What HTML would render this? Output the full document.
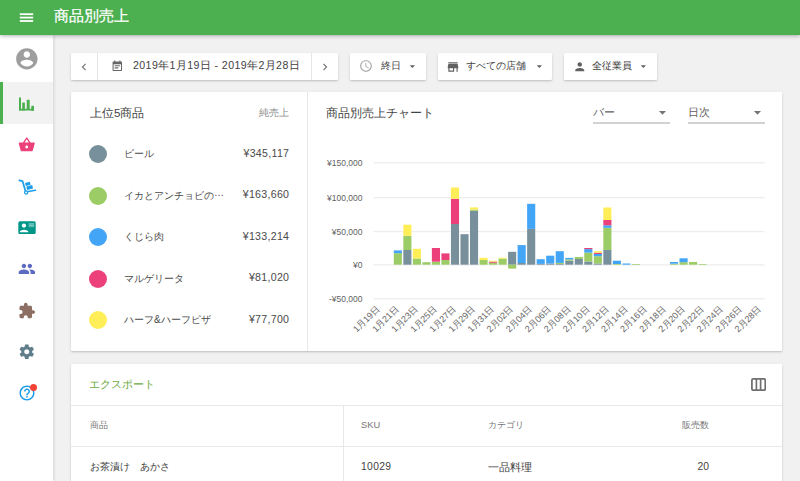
<!DOCTYPE html>
<html><head><meta charset="utf-8">
<style>
*{margin:0;padding:0;box-sizing:border-box}
html,body{width:800px;height:481px;overflow:hidden;background:#f1f1f1;font-family:"Liberation Sans",sans-serif;color:#4a4a4a}
.abs{position:absolute}
.hdr{position:absolute;left:0;top:0;width:800px;height:35.4px;background:#4caf50;box-shadow:0 1px 4px rgba(0,0,0,.3);z-index:5}
.side{position:absolute;left:0;top:35px;width:53px;height:446px;background:#fff;box-shadow:1px 0 3px rgba(0,0,0,.12);z-index:4}
.card{position:absolute;background:#fff;border-radius:1.2px;box-shadow:0 1px 3px rgba(0,0,0,.12),0 1px 1.5px rgba(0,0,0,.1)}
.btn{position:absolute;top:53px;height:27px;background:#fff;border-radius:1.2px;box-shadow:0 1px 3px rgba(0,0,0,.12),0 1px 1.5px rgba(0,0,0,.1)}
.t{position:absolute;white-space:nowrap;line-height:1}
svg{display:block}
.yl{font-family:"Liberation Sans",sans-serif;font-size:8.5px;fill:#5f5f5f}
.xl{font-family:"Liberation Sans",sans-serif;font-size:9px;fill:#666}
</style></head><body>
<div class="hdr">
  <svg class="abs" style="left:0;top:0;width:40px;height:35px" viewBox="0 0 40 35"><rect x="19.8" y="13.3" width="13.4" height="1.8" fill="#fff"/><rect x="19.8" y="16.7" width="13.4" height="1.8" fill="#fff"/><rect x="19.8" y="20.1" width="13.4" height="1.8" fill="#fff"/></svg>
  <div class="t" style="left:53.5px;top:9px;font-size:14.5px;color:#fff;-webkit-text-stroke:0.25px #fff">商品別売上</div>
</div>
<div class="side">
  <svg class="abs" style="left:13.75px;top:11.15px;width:25.7px;height:25.7px" viewBox="0 0 24 24"><path fill="#9e9e9e" d="M12 2C6.48 2 2 6.48 2 12s4.48 10 10 10 10-4.48 10-10S17.52 2 12 2zm0 3c1.66 0 3 1.34 3 3s-1.34 3-3 3-3-1.34-3-3 1.34-3 3-3zm0 14.2c-2.5 0-4.71-1.28-6-3.22.03-1.99 4-3.08 6-3.08 1.99 0 5.970 1.09 6 3.08-1.29 1.94-3.5 3.22-6 3.22z"/></svg>
  <div class="abs" style="left:0;top:47px;width:53px;height:42px;background:#f2f2f2;border-left:3px solid #4caf50"></div>
  <svg class="abs" style="left:18px;top:61px;width:17px;height:15px" viewBox="0 0 17 15">
    <rect x="1" y="1.5" width="2" height="13" fill="#4caf50"/>
    <rect x="4.2" y="6.6" width="2.7" height="8" fill="#4caf50"/>
    <rect x="8.7" y="3.8" width="3" height="10" fill="#4caf50"/>
    <rect x="13.3" y="9.8" width="2.7" height="5" fill="#4caf50"/>
    <rect x="1" y="12.8" width="15" height="1.7" fill="#4caf50"/>
  </svg>
  <svg class="abs" style="left:17.75px;top:100.8px;width:17.5px;height:17.5px" viewBox="0 0 24 24"><path fill="#ec407a" d="M17.21 9l-4.38-6.56c-.19-.28-.51-.42-.83-.42-.32 0-.64.14-.83.43L6.79 9H2c-.55 0-1 .45-1 1 0 .09.01.18.04.27l2.540 9.27c.23.84 1 1.46 1.92 1.46h13c.92 0 1.69-.62 1.93-1.46l2.54-9.27L23 10c0-.55-.45-1-1-1h-4.79zM9 9l3-4.4L15 9H9zm3 8c-1.1 0-2-.9-2-2s.9-2 2-2 2 .9 2 2-.9 2-2 2z"/></svg>
  <svg class="abs" style="left:17.5px;top:143.6px;width:19px;height:17px" viewBox="0 0 19 17">
    <path d="M1.3 1.4 L4.5 2.1 L7.3 11.6" stroke="#1e9de8" stroke-width="1.7" fill="none" stroke-linecap="round" stroke-linejoin="round"/>
    <circle cx="8.1" cy="13.5" r="1.55" stroke="#1e9de8" stroke-width="1.3" fill="none"/>
    <path d="M10.3 12.5 L17.4 11.3" stroke="#1e9de8" stroke-width="1.6" stroke-linecap="round"/>
    <path d="M7.0 3.9 L11.8 2.7 L12.6 5.7 L7.8 6.9 Z" fill="#1e9de8"/>
    <path d="M8.3 7.5 L14.2 6.1 L15.0 9.5 L9.1 10.9 Z" fill="#1e9de8"/>
  </svg>
  <svg class="abs" style="left:17.5px;top:185.5px;width:18px;height:13.5px" viewBox="0 0 18 13.5">
    <rect x="0.3" y="0.3" width="17.4" height="12.9" rx="1.6" fill="#009688"/>
    <circle cx="5.96" cy="4.6" r="2.15" fill="#fff"/>
    <path d="M1.6 11.3 C1.6 7.9 10.5 7.9 10.5 11.3 Z" fill="#fff"/>
    <rect x="10.7" y="2.5" width="5.5" height="0.9" fill="#fff" opacity=".75"/>
    <rect x="10.7" y="3.9" width="5.5" height="0.9" fill="#fff" opacity=".6"/>
    <rect x="10.7" y="5.3" width="5.5" height="0.9" fill="#fff" opacity=".45"/>
  </svg>
  <svg class="abs" style="left:17.6px;top:224.8px;width:17.75px;height:17.75px" viewBox="0 0 24 24"><path fill="#5c6bc0" d="M16 11c1.66 0 2.99-1.34 2.99-3S17.66 5 16 5c-1.66 0-3 1.34-3 3s1.34 3 3 3zm-8 0c1.66 0 2.99-1.34 2.99-3S9.66 5 8 5C6.34 5 5 6.34 5 8s1.34 3 3 3zm0 2c-2.33 0-7 1.17-7 3.5V19h14v-2.5c0-2.33-4.67-3.5-7-3.5zm8 0c-.29 0-.62.02-.97.05 1.16.84 1.97 1.97 1.97 3.45V19h6v-2.5c0-2.33-4.67-3.5-7-3.5z"/></svg>
  <svg class="abs" style="left:17.75px;top:266.5px;width:17.75px;height:17.75px" viewBox="0 0 24 24"><path fill="#8d6e63" d="M20.5 11H19V7c0-1.1-.9-2-2-2h-4V3.5C13 2.12 11.88 1 10.5 1S8 2.12 8 3.5V5H4c-1.1 0-1.99.9-1.99 2v3.8H3.5c1.49 0 2.7 1.21 2.7 2.7s-1.21 2.7-2.7 2.7H2V20c0 1.1.9 2 2 2h3.8v-1.5c0-1.49 1.21-2.7 2.7-2.7 1.49 0 2.7 1.21 2.7 2.7V22H17c1.1 0 2-.9 2-2v-4h1.5c1.38 0 2.5-1.12 2.5-2.5S21.88 11 20.5 11z"/></svg>
  <svg class="abs" style="left:17.75px;top:307.65px;width:17.5px;height:17.5px" viewBox="0 0 24 24"><path fill="#607d8b" d="M19.43 12.98c.04-.32.07-.64.07-.98s-.03-.66-.07-.98l2.11-1.65c.19-.15.24-.42.12-.64l-2-3.46c-.12-.22-.39-.3-.61-.22l-2.49 1c-.52-.4-1.08-.73-1.69-.98l-.38-2.65C14.46 2.18 14.25 2 14 2h-4c-.25 0-.46.18-.49.42l-.38 2.65c-.61.25-1.17.59-1.690.98l-2.49-1c-.23-.09-.49 0-.61.22l-2 3.46c-.13.22-.07.49.12.64l2.11 1.65c-.04.32-.07.65-.07.98s.03.66.07.98l-2.11 1.65c-.19.15-.24.42-.12.64l2 3.46c.12.22.39.3.61.22l2.49-1c.52.4 1.08.73 1.69.98l.38 2.65c.03.24.24.42.49.42h4c.25 0 .46-.18.49-.42l.38-2.65c.61-.25 1.17-.59 1.69-.98l2.49 1c.23.09.49 0 .61-.22l2-3.46c.12-.22.07-.49-.12-.64l-2.11-1.65zM12 15.5c-1.93 0-3.5-1.57-3.5-3.5s1.57-3.5 3.5-3.5 3.5 1.57 3.5 3.5-1.57 3.5-3.5 3.5z"/></svg>
  <svg class="abs" style="left:17.5px;top:349px;width:18px;height:18px" viewBox="0 0 24 24"><path fill="#1e9de8" d="M11 18h2v-2h-2v2zm1-16C6.48 2 2 6.48 2 12s4.48 10 10 10 10-4.48 10-10S17.52 2 12 2zm0 18c-4.41 0-8-3.59-8-8s3.59-8 8-8 8 3.590 8 8-3.59 8-8 8zm0-14c-2.21 0-4 1.79-4 4h2c0-1.1.9-2 2-2s2 .9 2 2c0 2-3 1.75-3 5h2c0-2.25 3-2.5 3-5 0-2.21-1.79-4-4-4z"/></svg>
  <div class="abs" style="left:29.7px;top:348.8px;width:7.6px;height:7.6px;border-radius:50%;background:#f44336"></div>
</div>

<!-- toolbar -->
<div class="btn" style="left:71px;width:267px">
  <svg class="abs" style="left:6px;top:6.5px;width:14px;height:14px" viewBox="0 0 24 24"><path fill="#757575" d="M15.41 7.41L14 6l-6 6 6 6 1.41-1.41L10.83 12z"/></svg>
  <div class="abs" style="left:26px;top:0;width:1px;height:27px;background:#e6e6e6"></div>
  <svg class="abs" style="left:39.6px;top:7px;width:12.6px;height:12.6px" viewBox="0 0 24 24"><path fill="#666" d="M17 10H7v2h10v-2zm2-7h-1V1h-2v2H8V1H6v2H5c-1.11 0-1.99.9-1.99 2L3 19c0 1.1.89 2 2 2h14c1.1 0 2-.9 2-2V5c0-1.1-.9-2-2-2zm0 16H5V8h14v11zm-5-5H7v2h7v-2z"/></svg>
  <div class="t" style="left:62px;top:7.4px;font-size:10.6px;letter-spacing:0.4px;color:#424242">2019年1月19日 - 2019年2月28日</div>
  <div class="abs" style="left:240px;top:0;width:1px;height:27px;background:#e6e6e6"></div>
  <svg class="abs" style="left:247px;top:6.5px;width:14px;height:14px" viewBox="0 0 24 24"><path fill="#757575" d="M10 6L8.59 7.41 13.17 12l-4.58 4.59L10 18l6-6z"/></svg>
</div>
<div class="btn" style="left:350px;width:75.5px">
  <svg class="abs" style="left:8.5px;top:6px;width:14px;height:14px" viewBox="0 0 24 24"><path fill="#a6a6a6" d="M11.99 2C6.47 2 2 6.48 2 12s4.47 10 9.99 10C17.52 22 22 17.52 22 12S17.52 2 11.99 2zM12 20c-4.42 0-8-3.58-8-8s3.58-8 8-8 8 3.58 8 8-3.58 8-8 8zm.5-13H11v6l5.25 3.15.75-1.23-4.5-2.67z"/></svg>
  <div class="t" style="left:31px;top:8px;font-size:10px;color:#424242">終日</div>
  <svg class="abs" style="left:55.8px;top:7.2px;width:12.7px;height:12.7px" viewBox="0 0 24 24"><path fill="#616161" d="M7 10l5 5 5-5z"/></svg>
</div>
<div class="btn" style="left:437.5px;width:114.5px">
  <svg class="abs" style="left:8px;top:6.5px;width:14px;height:14px" viewBox="0 0 24 24"><path fill="#616161" d="M20 4H4v2h16V4zm1 10v-2l-1-5H4l-1 5v2h1v6h10v-6h4v6h2v-6h1zm-9 4H6v-4h6v4z"/></svg>
  <div class="t" style="left:28.5px;top:8px;font-size:10px;color:#424242">すべての店舗</div>
  <svg class="abs" style="left:95px;top:7.2px;width:12.7px;height:12.7px" viewBox="0 0 24 24"><path fill="#616161" d="M7 10l5 5 5-5z"/></svg>
</div>
<div class="btn" style="left:564px;width:93px">
  <svg class="abs" style="left:9px;top:6.5px;width:13.5px;height:13.5px" viewBox="0 0 24 24"><path fill="#616161" d="M12 12c2.21 0 4-1.79 4-4s-1.79-4-4-4-4 1.79-4 4 1.79 4 4 4zm0 2c-2.67 0-8 1.34-8 4v2h16v-2c0-2.66-5.33-4-8-4z"/></svg>
  <div class="t" style="left:27.5px;top:8px;font-size:10px;color:#424242">全従業員</div>
  <svg class="abs" style="left:73px;top:7.2px;width:12.7px;height:12.7px" viewBox="0 0 24 24"><path fill="#616161" d="M7 10l5 5 5-5z"/></svg>
</div>

<!-- card 1 -->
<div class="card" style="left:71px;top:92px;width:711px;height:259px">
  <div class="abs" style="left:236px;top:0;width:1px;height:259px;background:#e8e8e8"></div>
  <div class="t" style="left:19px;top:15px;font-size:11.6px;color:#424242">上位5商品</div>
  <div class="t" style="left:150px;width:68px;text-align:right;top:16px;font-size:9.5px;color:#8c8c8c">純売上</div>

  <div class="abs" style="left:18px;top:53px;width:18px;height:18px;border-radius:50%;background:#78909c"></div>
  <div class="t" style="left:53px;top:57px;font-size:10px">ビール</div>
  <div class="t" style="left:118px;width:100.3px;text-align:right;top:55.7px;font-size:10.6px;letter-spacing:0.3px">¥345,117</div>

  <div class="abs" style="left:18px;top:94.5px;width:18px;height:18px;border-radius:50%;background:#9ccc65"></div>
  <div class="t" style="left:53px;top:98.5px;font-size:10px">イカとアンチョビの<span style="position:relative;top:-2.5px;letter-spacing:-0.5px">…</span></div>
  <div class="t" style="left:118px;width:100.3px;text-align:right;top:97.2px;font-size:10.6px;letter-spacing:0.3px">¥163,660</div>

  <div class="abs" style="left:18px;top:136px;width:18px;height:18px;border-radius:50%;background:#42a5f5"></div>
  <div class="t" style="left:53px;top:140px;font-size:10px">くじら肉</div>
  <div class="t" style="left:118px;width:100.3px;text-align:right;top:138.7px;font-size:10.6px;letter-spacing:0.3px">¥133,214</div>

  <div class="abs" style="left:18px;top:177.5px;width:18px;height:18px;border-radius:50%;background:#ec407a"></div>
  <div class="t" style="left:53px;top:181.5px;font-size:10px">マルゲリータ</div>
  <div class="t" style="left:118px;width:100.3px;text-align:right;top:180.2px;font-size:10.6px;letter-spacing:0.3px">¥81,020</div>

  <div class="abs" style="left:18px;top:219px;width:18px;height:18px;border-radius:50%;background:#ffee58"></div>
  <div class="t" style="left:53px;top:223px;font-size:10px">ハーフ&amp;ハーフピザ</div>
  <div class="t" style="left:118px;width:100.3px;text-align:right;top:221.7px;font-size:10.6px;letter-spacing:0.3px">¥77,700</div>

  <div class="t" style="left:254.5px;top:15px;font-size:11.6px;color:#424242">商品別売上チャート</div>

  <div class="t" style="left:522px;top:15px;font-size:10.6px;color:#616161">バー</div>
  <svg class="abs" style="left:583.35px;top:11.65px;width:17px;height:17px" viewBox="0 0 24 24"><path fill="#757575" d="M7 10l5 5 5-5z"/></svg>
  <div class="abs" style="left:522px;top:30px;width:77px;height:1.6px;background:#d2d2d2"></div>
  <div class="t" style="left:616.5px;top:15px;font-size:10.6px;color:#616161">日次</div>
  <svg class="abs" style="left:678px;top:11.65px;width:17px;height:17px" viewBox="0 0 24 24"><path fill="#757575" d="M7 10l5 5 5-5z"/></svg>
  <div class="abs" style="left:616.5px;top:30px;width:77px;height:1.6px;background:#d2d2d2"></div>
</div>

<svg class="abs" style="left:0;top:0;width:800px;height:481px;z-index:2" viewBox="0 0 800 481">
<rect x="373.5" y="162.15" width="391" height="1.3" fill="#ededed"/>
<text x="362.5" y="165.80" text-anchor="end" class="yl">¥150,000</text>
<rect x="373.5" y="197.05" width="391" height="1.3" fill="#ededed"/>
<text x="362.5" y="200.70" text-anchor="end" class="yl">¥100,000</text>
<rect x="373.5" y="230.95" width="391" height="1.3" fill="#ededed"/>
<text x="362.5" y="234.60" text-anchor="end" class="yl">¥50,000</text>
<rect x="373.5" y="264.25" width="391" height="1.3" fill="#ededed"/>
<text x="362.5" y="267.90" text-anchor="end" class="yl">¥0</text>
<rect x="373.5" y="298.15" width="391" height="1.3" fill="#ededed"/>
<text x="362.5" y="301.80" text-anchor="end" class="yl">-¥50,000</text>
<rect x="393.80" y="253.20" width="8.1" height="11.50" fill="#9ccc65"/>
<rect x="393.80" y="250.40" width="8.1" height="2.80" fill="#42a5f5"/>
<rect x="403.32" y="250.00" width="8.1" height="14.70" fill="#78909c"/>
<rect x="403.32" y="235.80" width="8.1" height="14.20" fill="#9ccc65"/>
<rect x="403.32" y="224.70" width="8.1" height="11.10" fill="#ffee58"/>
<rect x="412.85" y="258.50" width="8.1" height="6.20" fill="#9ccc65"/>
<rect x="412.85" y="248.80" width="8.1" height="9.70" fill="#ffee58"/>
<rect x="422.37" y="262.20" width="8.1" height="2.50" fill="#9ccc65"/>
<rect x="431.89" y="261.70" width="8.1" height="3.00" fill="#9ccc65"/>
<rect x="431.89" y="248.00" width="8.1" height="13.70" fill="#ec407a"/>
<rect x="441.42" y="260.00" width="8.1" height="4.70" fill="#9ccc65"/>
<rect x="441.42" y="253.40" width="8.1" height="6.60" fill="#ec407a"/>
<rect x="450.94" y="224.00" width="8.1" height="40.70" fill="#78909c"/>
<rect x="450.94" y="198.80" width="8.1" height="25.20" fill="#ec407a"/>
<rect x="450.94" y="187.50" width="8.1" height="11.30" fill="#ffee58"/>
<rect x="460.47" y="234.20" width="8.1" height="30.50" fill="#78909c"/>
<rect x="469.99" y="210.80" width="8.1" height="53.90" fill="#78909c"/>
<rect x="469.99" y="209.50" width="8.1" height="1.30" fill="#9ccc65"/>
<rect x="469.99" y="207.40" width="8.1" height="2.10" fill="#ffee58"/>
<rect x="479.51" y="260.00" width="8.1" height="4.70" fill="#9ccc65"/>
<rect x="479.51" y="257.80" width="8.1" height="2.20" fill="#ffee58"/>
<rect x="489.04" y="262.80" width="8.1" height="1.90" fill="#9ccc65"/>
<rect x="489.04" y="261.60" width="8.1" height="1.20" fill="#ec407a"/>
<rect x="489.04" y="260.70" width="8.1" height="0.90" fill="#ffee58"/>
<rect x="498.56" y="258.60" width="8.1" height="6.10" fill="#9ccc65"/>
<rect x="498.56" y="257.70" width="8.1" height="0.90" fill="#ffee58"/>
<rect x="508.09" y="251.80" width="8.1" height="12.90" fill="#78909c"/>
<rect x="517.61" y="263.00" width="8.1" height="1.70" fill="#78909c"/>
<rect x="517.61" y="245.10" width="8.1" height="17.90" fill="#42a5f5"/>
<rect x="527.13" y="228.90" width="8.1" height="35.80" fill="#78909c"/>
<rect x="527.13" y="203.80" width="8.1" height="25.10" fill="#42a5f5"/>
<rect x="536.66" y="263.90" width="8.1" height="0.80" fill="#78909c"/>
<rect x="536.66" y="259.20" width="8.1" height="4.70" fill="#42a5f5"/>
<rect x="546.18" y="263.50" width="8.1" height="1.20" fill="#78909c"/>
<rect x="546.18" y="255.70" width="8.1" height="7.80" fill="#42a5f5"/>
<rect x="555.71" y="264.00" width="8.1" height="0.70" fill="#78909c"/>
<rect x="555.71" y="262.90" width="8.1" height="1.10" fill="#9ccc65"/>
<rect x="555.71" y="251.20" width="8.1" height="11.70" fill="#42a5f5"/>
<rect x="565.23" y="260.70" width="8.1" height="4.00" fill="#78909c"/>
<rect x="565.23" y="259.40" width="8.1" height="1.30" fill="#9ccc65"/>
<rect x="565.23" y="257.90" width="8.1" height="1.50" fill="#42a5f5"/>
<rect x="574.75" y="259.00" width="8.1" height="5.70" fill="#78909c"/>
<rect x="574.75" y="257.00" width="8.1" height="2.00" fill="#9ccc65"/>
<rect x="584.28" y="261.50" width="8.1" height="3.20" fill="#78909c"/>
<rect x="584.28" y="252.60" width="8.1" height="8.90" fill="#9ccc65"/>
<rect x="584.28" y="249.10" width="8.1" height="3.50" fill="#42a5f5"/>
<rect x="584.28" y="248.00" width="8.1" height="1.10" fill="#ec407a"/>
<rect x="593.80" y="263.50" width="8.1" height="1.20" fill="#78909c"/>
<rect x="593.80" y="256.20" width="8.1" height="7.30" fill="#9ccc65"/>
<rect x="593.80" y="254.00" width="8.1" height="2.20" fill="#42a5f5"/>
<rect x="593.80" y="252.70" width="8.1" height="1.30" fill="#ec407a"/>
<rect x="593.80" y="251.20" width="8.1" height="1.50" fill="#ffee58"/>
<rect x="603.33" y="250.00" width="8.1" height="14.70" fill="#78909c"/>
<rect x="603.33" y="227.80" width="8.1" height="22.20" fill="#9ccc65"/>
<rect x="603.33" y="225.30" width="8.1" height="2.50" fill="#42a5f5"/>
<rect x="603.33" y="220.00" width="8.1" height="5.30" fill="#ec407a"/>
<rect x="603.33" y="207.50" width="8.1" height="12.50" fill="#ffee58"/>
<rect x="612.85" y="264.00" width="8.1" height="0.70" fill="#9ccc65"/>
<rect x="612.85" y="260.70" width="8.1" height="3.30" fill="#42a5f5"/>
<rect x="622.37" y="263.50" width="8.1" height="1.20" fill="#42a5f5"/>
<rect x="631.90" y="264.00" width="8.1" height="0.70" fill="#9ccc65"/>
<rect x="669.99" y="263.70" width="8.1" height="1.00" fill="#9ccc65"/>
<rect x="669.99" y="262.00" width="8.1" height="1.70" fill="#42a5f5"/>
<rect x="679.52" y="262.20" width="8.1" height="2.50" fill="#9ccc65"/>
<rect x="679.52" y="258.30" width="8.1" height="3.90" fill="#42a5f5"/>
<rect x="689.04" y="262.00" width="8.1" height="2.70" fill="#9ccc65"/>
<rect x="698.57" y="264.00" width="8.1" height="0.70" fill="#9ccc65"/>
<rect x="508.09" y="264.70" width="8.1" height="3.90" fill="#9ccc65"/>
<text transform="translate(380.17,309.5) rotate(-45)" text-anchor="end" class="xl">1月19日</text>
<text transform="translate(399.24,309.5) rotate(-45)" text-anchor="end" class="xl">1月21日</text>
<text transform="translate(418.32,309.5) rotate(-45)" text-anchor="end" class="xl">1月23日</text>
<text transform="translate(437.39,309.5) rotate(-45)" text-anchor="end" class="xl">1月25日</text>
<text transform="translate(456.46,309.5) rotate(-45)" text-anchor="end" class="xl">1月27日</text>
<text transform="translate(475.54,309.5) rotate(-45)" text-anchor="end" class="xl">1月29日</text>
<text transform="translate(494.61,309.5) rotate(-45)" text-anchor="end" class="xl">1月31日</text>
<text transform="translate(513.69,309.5) rotate(-45)" text-anchor="end" class="xl">2月02日</text>
<text transform="translate(532.76,309.5) rotate(-45)" text-anchor="end" class="xl">2月04日</text>
<text transform="translate(551.83,309.5) rotate(-45)" text-anchor="end" class="xl">2月06日</text>
<text transform="translate(570.91,309.5) rotate(-45)" text-anchor="end" class="xl">2月08日</text>
<text transform="translate(589.98,309.5) rotate(-45)" text-anchor="end" class="xl">2月10日</text>
<text transform="translate(609.06,309.5) rotate(-45)" text-anchor="end" class="xl">2月12日</text>
<text transform="translate(628.13,309.5) rotate(-45)" text-anchor="end" class="xl">2月14日</text>
<text transform="translate(647.20,309.5) rotate(-45)" text-anchor="end" class="xl">2月16日</text>
<text transform="translate(666.28,309.5) rotate(-45)" text-anchor="end" class="xl">2月18日</text>
<text transform="translate(685.35,309.5) rotate(-45)" text-anchor="end" class="xl">2月20日</text>
<text transform="translate(704.43,309.5) rotate(-45)" text-anchor="end" class="xl">2月22日</text>
<text transform="translate(723.50,309.5) rotate(-45)" text-anchor="end" class="xl">2月24日</text>
<text transform="translate(742.57,309.5) rotate(-45)" text-anchor="end" class="xl">2月26日</text>
<text transform="translate(761.65,309.5) rotate(-45)" text-anchor="end" class="xl">2月28日</text>
</svg>

<!-- card 2 -->
<div class="card" style="left:71px;top:364px;width:711px;height:140px">
  <div class="t" style="left:17.8px;top:14.7px;font-size:10.5px;color:#6aaa40">エクスポート</div>
  <svg class="abs" style="left:680.1px;top:14.2px;width:15.2px;height:13.1px" viewBox="0 0 15.2 13.1"><rect x="0.9" y="0.9" width="13.4" height="11.3" rx="1.4" fill="none" stroke="#707070" stroke-width="1.8"/><rect x="4.55" y="1" width="1.7" height="11" fill="#707070"/><rect x="8.75" y="1" width="1.7" height="11" fill="#707070"/></svg>
  <div class="abs" style="left:0;top:41px;width:711px;height:1px;background:#e8e8e8"></div>
  <div class="abs" style="left:271.5px;top:41px;width:1px;height:100px;background:#e8e8e8"></div>
  <div class="abs" style="left:0;top:82px;width:711px;height:1px;background:#e8e8e8"></div>
  <div class="t" style="left:18.5px;top:56.5px;font-size:9.3px;color:#757575">商品</div>
  <div class="t" style="left:290px;top:56.5px;font-size:9.3px;color:#757575">SKU</div>
  <div class="t" style="left:417px;top:56.5px;font-size:9.3px;color:#757575">カテゴリ</div>
  <div class="t" style="left:550px;width:88px;text-align:right;top:56.5px;font-size:9.3px;color:#757575">販売数</div>
  <div class="t" style="left:18.5px;top:97.5px;font-size:10.3px;color:#424242">お茶漬け　あかさ</div>
  <div class="t" style="left:290px;top:97.5px;font-size:10.3px;letter-spacing:0.35px;color:#424242">10029</div>
  <div class="t" style="left:417px;top:97.5px;font-size:10.5px;color:#424242">一品料理</div>
  <div class="t" style="left:550px;width:88px;text-align:right;top:97.5px;font-size:10.3px;color:#424242">20</div>
</div>
</body></html>
